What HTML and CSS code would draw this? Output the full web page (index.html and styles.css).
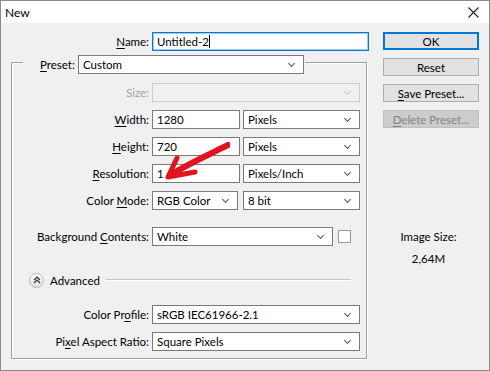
FILE: index.html
```html
<!DOCTYPE html>
<html lang="en">
<head>
    <meta charset="UTF-8">
    <title>New</title>
    <link rel="stylesheet" href="styles.css">
</head>
<body>
    <div class="window">
        <div class="titlebar">
            <span class="title">New</span>
            <svg class="close" width="11" height="11" viewBox="0 0 11 11">
                <path d="M0.5 0.5 L10.5 10.5 M10.5 0.5 L0.5 10.5" stroke="#222" stroke-width="1.1" fill="none"/>
            </svg>
        </div>

        <div class="client">
            <div class="main">
                <div class="row name-row">
                    <label class="lbl name-lbl"><u>N</u>ame:</label>
                    <div class="edit focused name-edit">Untitled-2<span class="caret"></span></div>
                </div>

                <div class="group">
                    <div class="legend">
                        <label class="preset-lbl"><u>P</u>reset:</label>
                        <div class="combo preset">Custom</div>
                    </div>

                    <div class="row first">
                        <label class="lbl dim">Size:</label>
                        <div class="combo disabled wide"></div>
                    </div>
                    <div class="row">
                        <label class="lbl"><u>W</u>idth:</label>
                        <div class="edit num">1280</div>
                        <div class="combo unit">Pixels</div>
                    </div>
                    <div class="row">
                        <label class="lbl"><u>H</u>eight:</label>
                        <div class="edit num">720</div>
                        <div class="combo unit">Pixels</div>
                    </div>
                    <div class="row">
                        <label class="lbl"><u>R</u>esolution:</label>
                        <div class="edit num">1</div>
                        <div class="combo unit">Pixels/Inch</div>
                    </div>
                    <div class="row">
                        <label class="lbl">Color <u>M</u>ode:</label>
                        <div class="combo mode">RGB Color</div>
                        <div class="combo unit">8 bit</div>
                    </div>
                    <div class="row bg-row">
                        <label class="lbl">Background <u>C</u>ontents:</label>
                        <div class="combo bg">White</div>
                        <span class="swatch"></span>
                    </div>

                    <div class="advanced">
                        <span class="toggle">
                            <svg width="8" height="8" viewBox="0 0 8 8">
                                <path d="M1 4 L4 1 L7 4 M1 7 L4 4 L7 7" stroke="#333" stroke-width="1.2" fill="none"/>
                            </svg>
                        </span>
                        <span class="adv-text">Advanced</span>
                        <span class="rule"></span>
                    </div>

                    <div class="row profile-row">
                        <label class="lbl">Color Pr<u>o</u>file:</label>
                        <div class="combo wide">sRGB IEC61966-2.1</div>
                    </div>
                    <div class="row">
                        <label class="lbl">Pi<u>x</u>el Aspect Ratio:</label>
                        <div class="combo wide">Square Pixels</div>
                    </div>
                </div>
            </div>

            <div class="side">
                <button class="btn default">OK</button>
                <button class="btn">Reset</button>
                <button class="btn"><u>S</u>ave Preset...</button>
                <button class="btn off"><u>D</u>elete Preset...</button>

                <div class="image-size">
                    <p>Image Size:</p>
                    <p>2,64M</p>
                </div>
            </div>
        </div>

        <svg class="arrow" width="70" height="45" viewBox="160 138 70 45">
            <path d="M228 145 C210 154 190 163 172 174" stroke="#e3131c" stroke-width="6" stroke-linecap="round" fill="none"/>
            <path d="M177 158 L168 177 L195 172" stroke="#e3131c" stroke-width="5" stroke-linecap="round" stroke-linejoin="round" fill="none"/>
        </svg>
    </div>
</body>
</html>
```

FILE: styles.css
```css
* {
    margin: 0;
    padding: 0;
    box-sizing: border-box;
    font-family: "Lato", "Liberation Sans", sans-serif;
}

body {
    width: 490px;
    height: 371px;
    background: #f0f0f0;
    font-size: 11.5px;
    color: #000;
}

u {
    text-decoration: underline;
    text-underline-offset: 2px;
}

.window {
    position: relative;
    width: 490px;
    height: 371px;
    border: 1px solid #8a8a8a;
    background: #f0f0f0;
}

.titlebar {
    height: 22px;
    background: #fff;
    display: flex;
    align-items: center;
    justify-content: space-between;
    padding: 0 10px 0 4px;
}

.title {
    font-size: 12px;
}

.client {
    display: flex;
}

.main {
    width: 370px;
}

.row {
    display: flex;
    align-items: center;
    gap: 3px;
    margin-top: 8px;
    height: 19px;
}

.lbl {
    width: 137px;
    text-align: right;
    white-space: nowrap;
}

.name-row {
    margin-top: 9px;
}

.name-lbl {
    width: 148px;
}

.dim {
    color: #a3a3a3;
}

.edit,
.combo {
    position: relative;
    height: 19px;
    line-height: 17px;
    padding-left: 4px;
    background: #fff;
    border: 1px solid #7a7a7a;
    white-space: nowrap;
}

.focused {
    border-color: #0078d7;
    box-shadow: inset 0 0 0 1px #9ccaf0;
}

.caret {
    display: inline-block;
    width: 1px;
    height: 13px;
    background: #000;
    vertical-align: -2px;
}

.name-edit {
    width: 217px;
}

.combo::after {
    content: "";
    position: absolute;
    right: 9px;
    top: 5px;
    width: 4px;
    height: 4px;
    border-right: 1px solid #555;
    border-bottom: 1px solid #555;
    transform: rotate(45deg);
}

.combo.disabled {
    background: #f0f0f0;
    border-color: #cccccc;
}

.combo.disabled::after {
    border-color: #c4c4c4;
}

.group {
    margin: 11px 0 0 10px;
    width: 356px;
    height: 297px;
    border: 1px solid #a0a0a0;
    box-shadow: 1px 1px 0 #fff, inset 1px 1px 0 #fff;
}

.legend {
    display: flex;
    width: fit-content;
    align-items: center;
    gap: 4px;
    margin: -8px 0 0 11px;
    padding: 0 1px 0 17px;
    background: #f0f0f0;
    height: 19px;
}

.preset-lbl {
    width: 34px;
}

.preset {
    width: 226px;
}

.group .row.first {
    margin-top: 9px;
}

.wide {
    width: 208px;
}

.num {
    width: 88px;
}

.unit {
    width: 117px;
}

.mode {
    width: 86px;
}

.mode + .unit {
    margin-left: 2px;
}

.bg-row {
    margin-top: 17px;
}

.bg {
    width: 181px;
}

.swatch {
    width: 13px;
    height: 13px;
    margin-left: 2px;
    background: #fff;
    border: 1px solid #9a9a9a;
}

.advanced {
    display: flex;
    align-items: center;
    height: 16px;
    margin-top: 26px;
    padding-left: 17px;
    padding-right: 15px;
}

.toggle {
    width: 15px;
    height: 15px;
    border-radius: 50%;
    border: 1px solid #b8b8b8;
    background: linear-gradient(#ffffff, #e2e2e2);
    display: flex;
    align-items: center;
    justify-content: center;
}

.adv-text {
    margin-left: 6px;
}

.rule {
    flex: 1;
    height: 2px;
    margin-left: 6px;
    border-top: 1px solid #c6c6c6;
    border-bottom: 1px solid #fff;
}

.profile-row {
    margin-top: 17px;
}

.side {
    width: 96px;
    margin-left: 12px;
    display: flex;
    flex-direction: column;
}

.btn {
    height: 18px;
    margin-top: 8px;
    border: 1px solid #adadad;
    background: #e1e1e1;
    font-size: 11.5px;
    color: #000;
}

.btn.default {
    margin-top: 9px;
    border: 2px solid #0078d7;
}

.btn.off {
    background: #cccccc;
    border-color: #bfbfbf;
    color: #838383;
}

.image-size {
    margin-top: 101px;
    text-align: center;
    padding-right: 5px;
    line-height: 16px;
}

.image-size p + p {
    margin-top: 6px;
}

.arrow {
    position: absolute;
    left: 159px;
    top: 137px;
}
```
